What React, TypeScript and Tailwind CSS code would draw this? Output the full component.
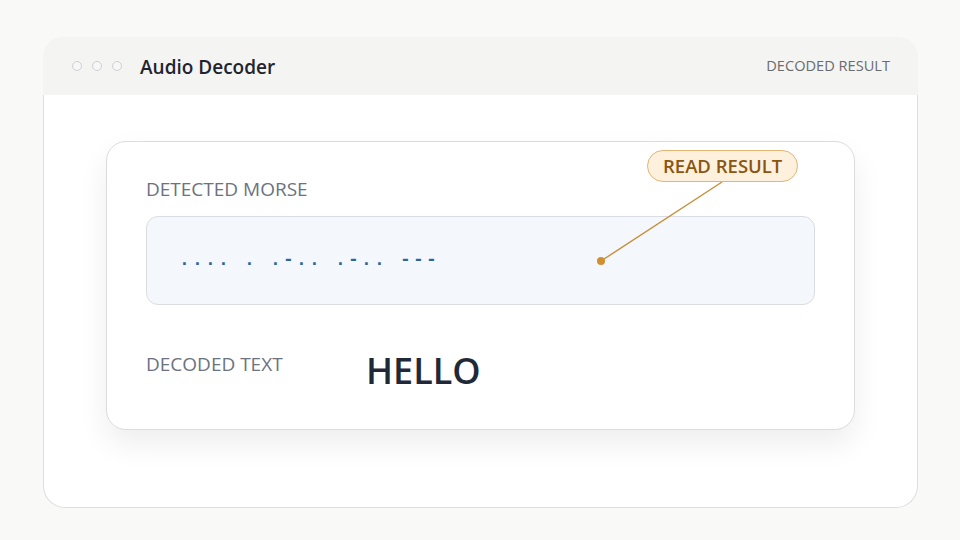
export default function App() {
  return (
    <div
      className="w-[960px] h-[540px] bg-[#f9f9f8] pt-[37px] pl-[43px]"
      style={{ fontFamily: '"Open Sans", "Noto Sans", sans-serif' }}
    >
      <div className="w-[875px] h-[471px] flex flex-col">
        {/* title bar */}
        <div className="h-[58px] bg-[#f4f4f3] rounded-t-[20px] flex items-center pl-[29px] pr-[28px]">
          <div className="flex gap-[10px]">
            <span className="w-[10px] h-[10px] rounded-full border border-[#cfcfcf] bg-[#f7f7f7]" />
            <span className="w-[10px] h-[10px] rounded-full border border-[#cfcfcf] bg-[#f7f7f7]" />
            <span className="w-[10px] h-[10px] rounded-full border border-[#cfcfcf] bg-[#f7f7f7]" />
          </div>
          <span className="ml-[18px] mt-[2px] text-[19px] font-semibold text-[#1f2430]">Audio Decoder</span>
          <span className="ml-auto text-[14.6px] text-[#6b6b6b]">DECODED RESULT</span>
        </div>

        {/* body */}
        <div className="flex-1 bg-white border border-t-0 border-[#dedede] rounded-b-[22px] pt-[46px] px-[62px]">
          <div className="relative h-[289px] bg-white border border-[#dcdcdc] rounded-[20px] shadow-[0_14px_30px_rgba(0,0,0,0.07)] pt-[34px] px-[39px]">
            <div className="text-[19px] leading-[26px] text-[#6b7280]">DETECTED MORSE</div>
            <div className="mt-[14px] h-[89px] bg-[#f4f7fc] border border-[#d9dde3] rounded-[12px] flex items-center pl-[32px]">
              <span
                className="text-[18px] font-bold text-[#2d6599] tracking-[2.2px] whitespace-pre"
                style={{ fontFamily: '"Liberation Mono", "DejaVu Sans Mono", monospace' }}
              >
                .... . .-.. .-.. ---
              </span>
            </div>
            <div className="mt-[48px] flex items-center">
              <span className="w-[220px] text-[19px] text-[#6b7280] -mt-[14px]">DECODED TEXT</span>
              <span className="text-[36px] font-semibold text-[#1f2937] leading-none">HELLO</span>
            </div>

            {/* callout */}
            <svg className="absolute left-0 top-0 pointer-events-none" width="749" height="289">
              <line x1="615" y1="40" x2="494" y2="119" stroke="#c98d34" strokeWidth="1.4" />
              <circle cx="494" cy="119" r="4" fill="#d08f30" />
            </svg>
            <div className="absolute left-[540px] top-[8px] h-[32px] px-[15px] flex items-center bg-[#fdf0dc] border border-[#e3b574] rounded-full text-[18.5px] font-semibold text-[#8a5511]">
              READ RESULT
            </div>
          </div>
        </div>
      </div>
    </div>
  );
}
